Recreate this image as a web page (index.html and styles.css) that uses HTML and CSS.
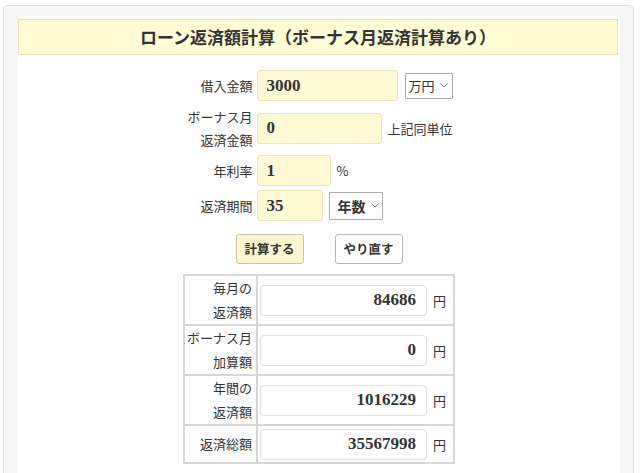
FILE: index.html
```html
<!DOCTYPE html>
<html lang="ja">
<head>
<meta charset="utf-8">
<title>ローン返済額計算</title>
<link rel="stylesheet" href="styles.css">
</head>
<body>
<div class="panel">
  <div class="box">
    <h1 class="title">ローン返済額計算（ボーナス月返済計算あり）</h1>
    <div class="form">
      <div class="row">
        <div class="label">借入金額</div>
        <div class="field">
          <input class="in in-w1" type="text" value="3000">
          <div class="sel sel-man"><span>万円</span><svg class="chev" width="8" height="5" viewBox="0 0 8 5"><polyline points="0.5,0.5 4,4 7.5,0.5" fill="none" stroke="#777" stroke-width="1"/></svg></div>
        </div>
      </div>
      <div class="row">
        <div class="label">ボーナス月<br>返済金額</div>
        <div class="field">
          <input class="in in-w2" type="text" value="0">
          <span class="unit">上記同単位</span>
        </div>
      </div>
      <div class="row">
        <div class="label">年利率</div>
        <div class="field">
          <input class="in in-w3" type="text" value="1">
          <span class="unit">%</span>
        </div>
      </div>
      <div class="row">
        <div class="label">返済期間</div>
        <div class="field">
          <input class="in in-w4" type="text" value="35">
          <div class="sel sel-year"><span>年数</span><svg class="chev" width="8" height="5" viewBox="0 0 8 5"><polyline points="0.5,0.5 4,4 7.5,0.5" fill="none" stroke="#777" stroke-width="1"/></svg></div>
        </div>
      </div>
    </div>
    <div class="buttons">
      <button class="btn btn-calc" type="button">計算する</button>
      <button class="btn btn-reset" type="button">やり直す</button>
    </div>
    <table class="result">
      <tr>
        <th>毎月の<br>返済額</th>
        <td><input class="out" type="text" value="84686"><span class="yen">円</span></td>
      </tr>
      <tr>
        <th>ボーナス月<br>加算額</th>
        <td><input class="out" type="text" value="0"><span class="yen">円</span></td>
      </tr>
      <tr>
        <th>年間の<br>返済額</th>
        <td><input class="out" type="text" value="1016229"><span class="yen">円</span></td>
      </tr>
      <tr class="tight">
        <th>返済総額</th>
        <td><input class="out" type="text" value="35567998"><span class="yen">円</span></td>
      </tr>
    </table>
  </div>
</div>
</body>
</html>
```

FILE: styles.css
```css
html, body {
  margin: 0;
  padding: 0;
  background: #ffffff;
}
body {
  font-family: "Noto Sans CJK JP", "Liberation Sans", sans-serif;
  color: #333333;
  font-size: 13px;
  overflow: hidden;
  height: 473px;
}
.panel {
  margin: 5px 0 0 3px;
  width: 631px;
  height: 480px;
  box-sizing: border-box;
  border: 1px solid #dddddd;
  border-radius: 5px;
  background: #f6f6f6;
  padding: 10px 13px 0 14px;
}
.box {
  background: #ffffff;
  height: 100%;
  padding-top: 3px;
  box-sizing: border-box;
}
.title {
  margin: 0 2px 0 0;
  height: 36px;
  box-sizing: border-box;
  border: 1px solid #e6e1b9;
  background: #fffbd3;
  font-size: 17px;
  font-weight: bold;
  line-height: 34px;
  text-align: center;
  color: #333333;
}
.form {
  width: 271px;
  margin: 13px auto 0;
  display: flex;
  flex-direction: column;
}
.row {
  display: grid;
  grid-template-columns: 69px 1fr;
  column-gap: 4px;
  align-items: center;
  padding: 2px 0;
}
.label {
  text-align: right;
  line-height: 23px;
  font-size: 13px;
}
.field {
  display: flex;
  align-items: center;
  height: 31px;
}
.in {
  height: 31px;
  box-sizing: border-box;
  border: 1px solid #ece5bb;
  border-radius: 3px;
  background: #fffad4;
  font-family: "Liberation Serif", serif;
  font-weight: bold;
  font-size: 17px;
  color: #333333;
  padding: 0 9px;
  margin: 0;
  outline: none;
}
.in-w1 { width: 141px; }
.in-w2 { width: 125px; }
.in-w3 { width: 74px; }
.in-w4 { width: 66px; }
.unit {
  margin-left: 6px;
  font-size: 13px;
}
.sel {
  display: flex;
  align-items: center;
  box-sizing: border-box;
  border: 1px solid #a9a9a9;
  background: #ffffff;
  border-radius: 1px;
}
.sel-man {
  margin-left: 7px;
  width: 48px;
  height: 26px;
  padding-left: 3px;
  font-size: 13px;
}
.sel-year {
  margin-left: 6px;
  width: 54px;
  height: 28px;
  padding-left: 8px;
  font-size: 14px;
  font-weight: bold;
}
.chev {
  margin-left: 5px;
}
.buttons {
  display: flex;
  justify-content: center;
  gap: 31px;
  margin-top: 11px;
}
.btn {
  width: 68px;
  height: 30px;
  box-sizing: border-box;
  border-radius: 3px;
  font-family: "Noto Sans CJK JP", sans-serif;
  font-size: 12.5px;
  font-weight: bold;
  color: #333333;
  padding: 0;
  margin: 0;
  line-height: 28px;
}
.btn-calc {
  background: #fdf6cf;
  border: 1px solid #c9c3a6;
}
.btn-reset {
  background: #ffffff;
  border: 1px solid #b5b5b5;
}
.result {
  margin: 10px auto 0;
  width: 272px;
  border-collapse: collapse;
}
.result th,
.result td {
  border: 2px solid #d6d6d6;
}
.result th {
  width: 67px;
  font-weight: normal;
  text-align: right;
  line-height: 24px;
  font-size: 13px;
  padding: 0 4px 0 0;
  height: 48px;
  white-space: nowrap;
}
.result td {
  padding: 0 0 0 2px;
  white-space: nowrap;
}
.result .tight th {
  height: 36px;
}
.out {
  width: 167px;
  height: 31px;
  box-sizing: border-box;
  border: 1px solid #dedede;
  border-radius: 4px;
  background: #ffffff;
  font-family: "Liberation Serif", serif;
  font-weight: bold;
  font-size: 17px;
  color: #333333;
  text-align: right;
  padding: 0 10px 0 0;
  margin: 0;
  vertical-align: middle;
  outline: none;
}
.yen {
  margin-left: 6px;
  font-size: 13px;
  vertical-align: middle;
}
```
